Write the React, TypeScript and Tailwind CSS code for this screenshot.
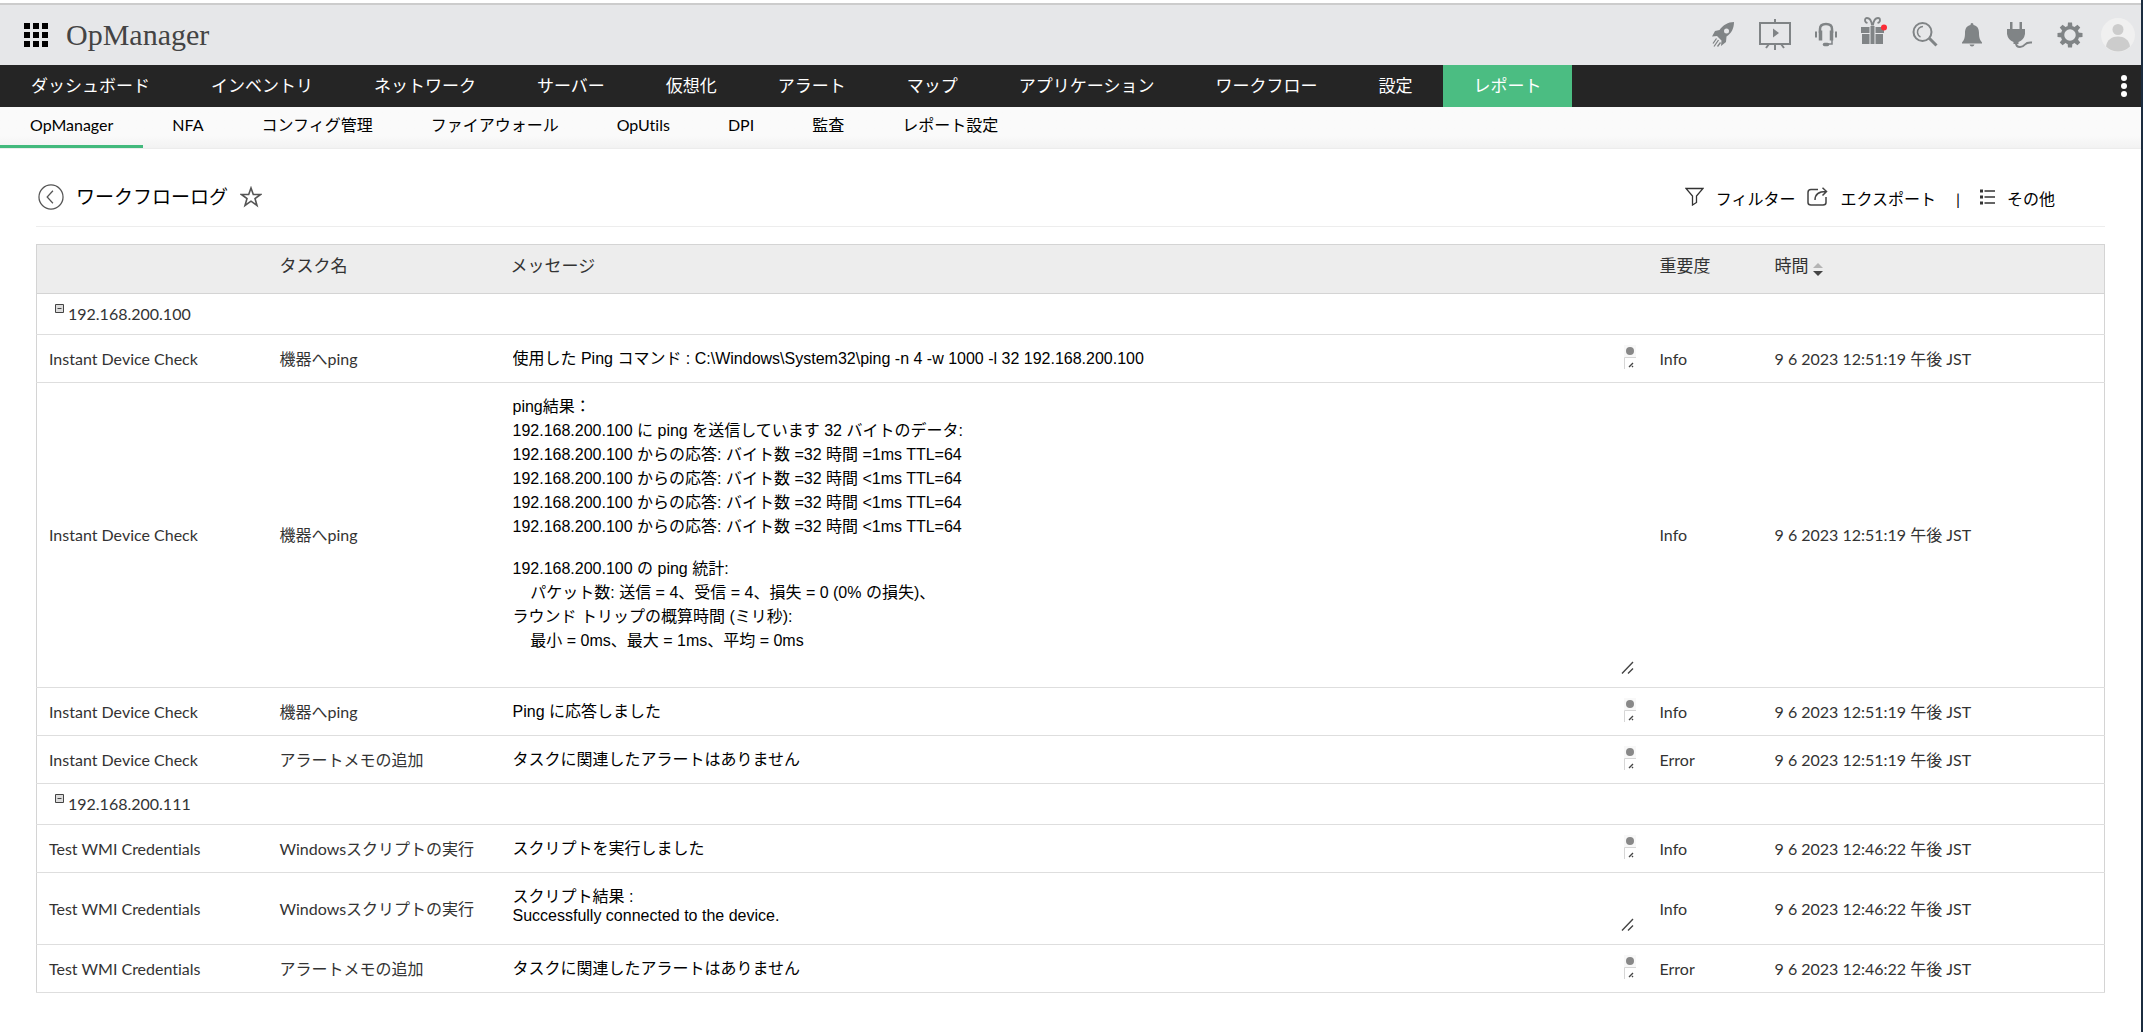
import type { ReactNode } from "react"

type LogRow = {
  profile: string
  task: string
  message: string
  severity: "Info" | "Error"
  time: string
  size: "short" | "medium" | "tall"
}

type LogGroup = {
  host: string
  rows: LogRow[]
}

const NAV_ITEMS = [
  "ダッシュボード",
  "インベントリ",
  "ネットワーク",
  "サーバー",
  "仮想化",
  "アラート",
  "マップ",
  "アプリケーション",
  "ワークフロー",
  "設定",
  "レポート",
]

const SUB_ITEMS = [
  "OpManager",
  "NFA",
  "コンフィグ管理",
  "ファイアウォール",
  "OpUtils",
  "DPI",
  "監査",
  "レポート設定",
]

const PING_RESULT = `ping結果：
192.168.200.100 に ping を送信しています 32 バイトのデータ:
192.168.200.100 からの応答: バイト数 =32 時間 =1ms TTL=64
192.168.200.100 からの応答: バイト数 =32 時間 <1ms TTL=64
192.168.200.100 からの応答: バイト数 =32 時間 <1ms TTL=64
192.168.200.100 からの応答: バイト数 =32 時間 <1ms TTL=64

192.168.200.100 の ping 統計:
    パケット数: 送信 = 4、受信 = 4、損失 = 0 (0% の損失)、
ラウンド トリップの概算時間 (ミリ秒):
    最小 = 0ms、最大 = 1ms、平均 = 0ms`

const GROUPS: LogGroup[] = [
  {
    host: "192.168.200.100",
    rows: [
      {
        profile: "Instant Device Check",
        task: "機器へping",
        message: "使用した Ping コマンド : C:\\Windows\\System32\\ping -n 4 -w 1000 -l 32 192.168.200.100",
        severity: "Info",
        time: "9 6 2023 12:51:19 午後 JST",
        size: "short",
      },
      {
        profile: "Instant Device Check",
        task: "機器へping",
        message: PING_RESULT,
        severity: "Info",
        time: "9 6 2023 12:51:19 午後 JST",
        size: "tall",
      },
      {
        profile: "Instant Device Check",
        task: "機器へping",
        message: "Ping に応答しました",
        severity: "Info",
        time: "9 6 2023 12:51:19 午後 JST",
        size: "short",
      },
      {
        profile: "Instant Device Check",
        task: "アラートメモの追加",
        message: "タスクに関連したアラートはありません",
        severity: "Error",
        time: "9 6 2023 12:51:19 午後 JST",
        size: "short",
      },
    ],
  },
  {
    host: "192.168.200.111",
    rows: [
      {
        profile: "Test WMI Credentials",
        task: "Windowsスクリプトの実行",
        message: "スクリプトを実行しました",
        severity: "Info",
        time: "9 6 2023 12:46:22 午後 JST",
        size: "short",
      },
      {
        profile: "Test WMI Credentials",
        task: "Windowsスクリプトの実行",
        message: "スクリプト結果 :\nSuccessfully connected to the device.",
        severity: "Info",
        time: "9 6 2023 12:46:22 午後 JST",
        size: "medium",
      },
      {
        profile: "Test WMI Credentials",
        task: "アラートメモの追加",
        message: "タスクに関連したアラートはありません",
        severity: "Error",
        time: "9 6 2023 12:46:22 午後 JST",
        size: "short",
      },
    ],
  },
]

const MESSAGE_HEIGHT: Record<LogRow["size"], string> = {
  short: "h-6",
  medium: "h-12",
  tall: "h-[281px]",
}

function IconButton({ label, children }: { label: string; children: ReactNode }) {
  return (
    <button type="button" aria-label={label} className="flex shrink-0 items-center justify-center text-[#808486]">
      {children}
    </button>
  )
}

function RocketIcon() {
  return (
    <svg width="24" height="28" viewBox="0 0 24 28" fill="currentColor">
      <path d="M23 1C17 1 12 4 8.500 9L4 10 1 15.500l5-.5 4.500 4.500-.5 5.500 5-4 .5-5.500C20.500 12.500 23 7 23 1Z" />
      <circle cx="15.500" cy="10" r="2.500" fill="#e6e7e9" />
      <path d="m5.500 17.500-3.500 5m5.500-3.500-4.500 6.500m6.500-4-3 4" fill="none" stroke="currentColor" strokeWidth="1.300" />
    </svg>
  )
}

function PresentationIcon() {
  return (
    <svg width="32" height="32" viewBox="0 0 32 32" fill="none" stroke="currentColor" strokeWidth="2">
      <path d="M1 4h30v21H1ZM16 0v4M16 25v6M10 25l-3 4M22 25l3 4" />
      <path d="M14 9.500v9l6-4.500Z" fill="currentColor" stroke="none" />
    </svg>
  )
}

function HeadsetIcon() {
  return (
    <svg width="22" height="26" viewBox="0 0 22 26" fill="none" stroke="currentColor" strokeWidth="2">
      <path d="M5 11V7q0-5 6-5t6 5v4" strokeWidth="2.500" />
      <path d="M1 9.500v6M21 9.500v6" />
      <path d="M5.500 8.500v10M16.500 8.500v10" strokeWidth="3.500" />
      <path d="M17 18v4h-4" strokeWidth="1.500" />
      <path d="M9.500 22.500h3" strokeWidth="3.500" strokeLinecap="round" />
    </svg>
  )
}

function GiftIcon() {
  return (
    <svg width="27" height="28" viewBox="0 0 27 28" fill="currentColor">
      <path d="M11 8.500C10.500 4 8.500 1 6 1S3 5 6.500 6M12 8.500C12.500 4 14.500 1 17 1s3 4-.5 5" fill="none" stroke="currentColor" strokeWidth="1.800" />
      <path d="M0 10h8.500v6H0ZM14.500 10H23v6h-8.500ZM9.500 9h4v18h-4ZM1 17h7.500v10H1ZM14.500 17H22v10h-7.500Z" />
      <circle cx="23" cy="10.500" r="3" fill="#fb2c36" />
    </svg>
  )
}

function SearchIcon() {
  return (
    <svg width="26" height="26" viewBox="0 0 26 26" fill="none" stroke="currentColor">
      <circle cx="10.500" cy="10" r="9" strokeWidth="2" />
      <path d="M11 4.500a5.500 5.500 0 0 0-5.500 6q.5 3.500 3 4.500" strokeWidth="1.500" />
      <path d="m17 16 7.500 7.500" strokeWidth="3" />
    </svg>
  )
}

function BellIcon() {
  return (
    <svg width="20" height="24" viewBox="0 0 20 24" fill="currentColor">
      <path d="M10 0q1.500 0 1.500 2C16 3 17 6.500 17 10c0 5 1 7 3 9.500v1H0v-1C2 17 3 15 3 10 3 6.500 4 3 8.500 2 8.500 0 10 0 10 0Z" />
      <path d="M7.500 21.500h5q-.5 2-2.500 2t-2.500-2Z" />
    </svg>
  )
}

function PlugIcon() {
  return (
    <svg width="27" height="27" viewBox="0 0 27 27" fill="currentColor">
      <path d="M4 0h2.500v7H4ZM13.500 0H16v7h-2.500ZM1 7h18v5q-1 6-6.500 8v2h-5v-2Q2 18 1 12Z" />
      <path d="M10 21q0 4 4 4 3 0 5-2.500t7-2" fill="none" stroke="currentColor" strokeWidth="2" />
    </svg>
  )
}

function GearIcon() {
  const teeth = [0, 45, 90, 135, 180, 225, 270, 315]
  return (
    <svg width="26" height="26" viewBox="0 0 26 26" fill="currentColor">
      <circle cx="13" cy="13" r="7.500" fill="none" stroke="currentColor" strokeWidth="3.500" />
      {teeth.map((angle) => (
        <path key={angle} d="M11 .5h4l.5 4.500h-5Z" transform={`rotate(${angle} 13 13)`} />
      ))}
    </svg>
  )
}

function AvatarIcon() {
  return (
    <svg width="34" height="34" viewBox="0 0 34 34">
      <circle cx="17" cy="17" r="17" fill="#f0f0f0" />
      <circle cx="17" cy="11.500" r="5.500" fill="#ccc" />
      <path d="M5 28.500C6 21.500 11 18.500 17 18.500s11 3 12 10A17 17 0 0 1 5 28.500Z" fill="#ccc" />
    </svg>
  )
}

function AppsIcon() {
  return (
    <svg width="24" height="24" viewBox="0 0 24 24" fill="#000">
      {[0, 9, 18].map((y) =>
        [0, 9, 18].map((x) => <rect key={`${x}-${y}`} x={x} y={y} width="6" height="6" />),
      )}
    </svg>
  )
}

// Resize grip in the lower right corner of each message box
function Grip() {
  return (
    <svg width="13" height="13" viewBox="0 0 13 13" fill="none" stroke="#444" strokeWidth="1.400" className="mr-0.5 shrink-0">
      <path d="M1 12.500 12 1M7 12.500l5-5" />
    </svg>
  )
}

function ShortGrip() {
  return (
    <svg width="12" height="24" viewBox="0 0 12 24" fill="none" className="shrink-0">
      <path d="M0 0h12v12H0Z" fill="#f8f8f8" />
      <circle cx="6" cy="6" r="4" fill="#888" />
      <path d="M.5 24V12.500H12" stroke="#d6d6d6" />
      <path d="m5 22 4-4M8 22l1-1" stroke="#444" strokeWidth="1.400" />
    </svg>
  )
}

function Header() {
  return (
    <header className="flex h-[62px] items-center justify-between border-t-2 border-[#ccc] bg-[#e6e7e9] pl-6 pr-1.5">
      <div className="flex items-center gap-[18px]">
        <button type="button" aria-label="Apps">
          <AppsIcon />
        </button>
        <span className="font-['Roboto_Slab','Liberation_Serif',serif] text-[30px] leading-9 text-[#444]">OpManager</span>
      </div>
      <div className="flex items-center gap-[18px]">
        <div className="flex items-center gap-6">
          <IconButton label="Quick start"><RocketIcon /></IconButton>
          <IconButton label="Demo"><PresentationIcon /></IconButton>
          <IconButton label="Support"><HeadsetIcon /></IconButton>
          <div className="pb-2">
            <IconButton label="What's new"><GiftIcon /></IconButton>
          </div>
          <IconButton label="Search"><SearchIcon /></IconButton>
          <IconButton label="Alarms"><BellIcon /></IconButton>
          <IconButton label="Plugins"><PlugIcon /></IconButton>
          <IconButton label="Settings"><GearIcon /></IconButton>
        </div>
        <IconButton label="Account"><AvatarIcon /></IconButton>
      </div>
    </header>
  )
}

function MainNav() {
  return (
    <nav aria-label="Main" className="flex h-[42px] justify-between bg-[#252525] text-[17px] text-white">
      <div className="flex">
        {NAV_ITEMS.map((item) => (
          <a
            key={item}
            href="#"
            className={
              item === "レポート"
                ? "flex items-center bg-[#4bbd82] pl-[31px] pr-[30px]"
                : "flex items-center pl-[31px] pr-[30px]"
            }
          >
            {item}
          </a>
        ))}
      </div>
      <button type="button" aria-label="More" className="px-3.5">
        <svg width="6" height="22" viewBox="0 0 6 22" fill="#fff">
          <circle cx="3" cy="3" r="3" />
          <circle cx="3" cy="11" r="3" />
          <circle cx="3" cy="19" r="3" />
        </svg>
      </button>
    </nav>
  )
}

function SubNav() {
  return (
    <nav
      aria-label="Reports"
      className="flex h-[42px] border-b border-[#ececec] bg-linear-to-b from-[#fafafa] from-70% to-[#f2f2f2] text-base text-black"
    >
      {SUB_ITEMS.map((item, i) => (
        <a
          key={item}
          href="#"
          className={
            i === 0
              ? "border-b-3 border-[#42b97c] px-[30px] pt-1.5"
              : "px-[29px] pt-1.5"
          }
        >
          {item}
        </a>
      ))}
    </nav>
  )
}

function TitleBar() {
  return (
    <div className="flex h-[60px] items-center justify-between border-b border-[#ededed] pl-0.5 pr-[50px]">
      <div className="flex items-center gap-3">
        <button type="button" aria-label="Back">
          <svg width="26" height="26" viewBox="0 0 27 27" fill="none" stroke="#555" strokeWidth="1.300">
            <circle cx="13.500" cy="13.500" r="12.500" />
            <path d="m15.500 7-6 6.500 6 6.500" />
          </svg>
        </button>
        <h1 className="text-[19px] leading-7 text-black">ワークフローログ</h1>
        <button type="button" aria-label="Favorite">
          <svg width="22" height="22" viewBox="0 0 22 22" fill="none" stroke="#555" strokeWidth="1.600">
            <path d="m11 2 2.300 6.500h7.200L15 12.500l2 7-6-4.300-6 4.300 2-7-5.500-4h7.200Z" />
          </svg>
        </button>
      </div>
      <div className="flex items-center pt-1 text-base text-black">
        <button type="button" className="flex items-center gap-3">
          <svg width="19" height="19" viewBox="0 0 19 19" fill="none" stroke="#333" strokeWidth="1.300" className="mb-1">
            <path d="M1 1.500h17L11.500 9v6.500l-4 2.500V9Z" />
          </svg>
          フィルター
        </button>
        <button type="button" className="ml-3 flex items-center gap-3">
          <svg width="21" height="19" viewBox="0 0 21 19" fill="none" stroke="#444" strokeWidth="1.500" className="mb-1">
            <path d="M11 2.500H4q-3 0-3 3v10q0 2.500 3 2.500h12q3 0 3-2.500V10" />
            <path d="M8 13c0-6 4-8.500 11-8.500M15.500.8l4 3.700-4 4" />
          </svg>
          エクスポート
        </button>
        <span className="mx-5">|</span>
        <button type="button" className="flex items-center gap-3">
          <svg width="15" height="16" viewBox="0 0 15 16" fill="none" stroke="#333" strokeWidth="1.500" className="mb-1">
            <path d="M4.500 2H15M4.500 8H15M4.500 14H15" />
            <path d="M0 2h3M0 8h3M0 14h3" strokeWidth="3" />
          </svg>
          その他
        </button>
      </div>
    </div>
  )
}

function LogTable() {
  return (
    <table className="mt-[17px] w-full table-fixed border-collapse border border-[#d4d4d4] text-left text-[#333]">
      <colgroup>
        <col className="w-[231px]" />
        <col className="w-[231px]" />
        <col />
        <col className="w-[115px]" />
        <col className="w-[342px]" />
      </colgroup>
      <thead className="bg-[#ededed] text-[17px]">
        <tr className="h-[49px] border-b border-[#d4d4d4]">
          <th aria-label="Profile" />
          <th className="px-3 pb-1.5 font-normal">タスク名</th>
          <th className="px-3 pb-1.5 font-normal">メッセージ</th>
          <th className="px-3 pb-1.5 font-normal">重要度</th>
          <th aria-sort="descending" className="px-3 pb-1.5 font-normal">
            <button type="button" className="flex items-end gap-1">
              時間
              <svg width="10" height="14" viewBox="0 0 10 14" className="mb-0.5">
                <path d="M5 0l5 5H0Z" fill="#b4b4b4" />
                <path d="M0 8h10l-5 5Z" fill="#444" />
              </svg>
            </button>
          </th>
        </tr>
      </thead>
      {GROUPS.map((group) => (
        <tbody key={group.host} className="text-base">
          <tr className="h-[41px] border-b border-[#dedede]">
            <td colSpan={5} className="px-[18px]">
              <button type="button" aria-expanded="true" className="flex items-start gap-1">
                <svg width="9" height="9" viewBox="0 0 9 9" fill="#ddd" stroke="#444" className="mt-0.5">
                  <path d="M.5.500h8v8h-8ZM2.500 4.500h4" />
                </svg>
                {group.host}
              </button>
            </td>
          </tr>
          {group.rows.map((row, i) => (
            <tr key={i} className="border-b border-[#dedede]">
              <td className="px-3">{row.profile}</td>
              <td className="px-3 whitespace-nowrap">{row.task}</td>
              <td className="pt-2.5 pr-3 pb-[13px] pl-3.5">
                <div className="flex items-end">
                  <textarea
                    readOnly
                    aria-label={`${row.profile} ${row.task}`}
                    value={row.message}
                    className={`block flex-1 resize-none overflow-hidden font-['Liberation_Sans','Noto_Sans_CJK_JP',sans-serif] text-base leading-[normal] text-black outline-none ${MESSAGE_HEIGHT[row.size]}`}
                  />
                  {row.size === "short" ? <ShortGrip /> : <Grip />}
                </div>
              </td>
              <td className="px-3">{row.severity}</td>
              <td className="px-3">{row.time}</td>
            </tr>
          ))}
        </tbody>
      ))}
    </table>
  )
}

export default function App() {
  return (
    <div className="min-h-screen border-r-2 border-[#1b2c3f] bg-white pt-[3px] font-['Lato','Noto_Sans_CJK_JP',sans-serif] [font-variant-ligatures:none]">
      <Header />
      <MainNav />
      <SubNav />
      <main className="px-9 pt-[18px]">
        <TitleBar />
        <LogTable />
      </main>
    </div>
  )
}
